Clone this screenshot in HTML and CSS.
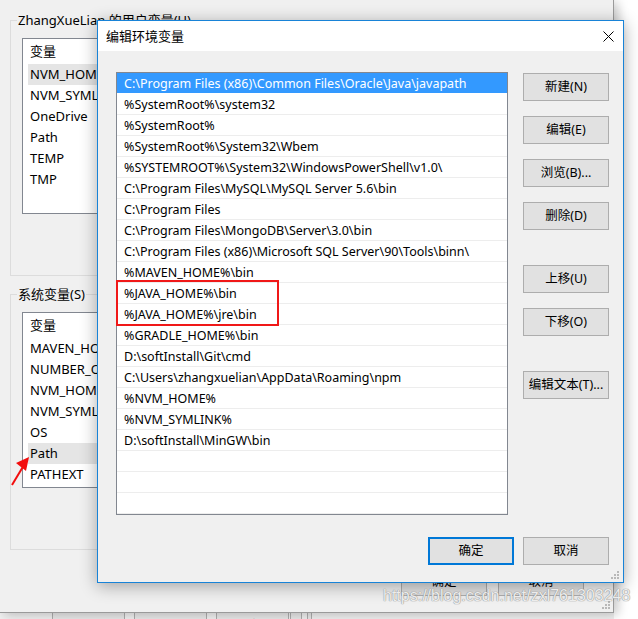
FILE: index.html
```html
<!DOCTYPE html>
<html lang="zh-CN">
<head>
<meta charset="utf-8">
<title>编辑环境变量</title>
<link rel="stylesheet" href="styles.css">
</head>
<body>
<div class="screen">
  <div class="bgwin">
    <fieldset class="group">
      <legend>ZhangXueLian 的用户变量(U)</legend>
      <div class="varlist">
        <div class="vhead">变量</div>
        <div class="vrow vsel">NVM_HOME</div>
        <div class="vrow">NVM_SYMLINK</div>
        <div class="vrow">OneDrive</div>
        <div class="vrow">Path</div>
        <div class="vrow">TEMP</div>
        <div class="vrow">TMP</div>
      </div>
    </fieldset>
    <fieldset class="group group-sys">
      <legend>系统变量(S)</legend>
      <div class="varlist">
        <div class="vhead">变量</div>
        <div class="vrow">MAVEN_HOME</div>
        <div class="vrow">NUMBER_OF_PROCESSORS</div>
        <div class="vrow">NVM_HOME</div>
        <div class="vrow">NVM_SYMLINK</div>
        <div class="vrow">OS</div>
        <div class="vrow vsel">Path</div>
        <div class="vrow">PATHEXT</div>
      </div>
    </fieldset>
    <div class="bgbtns">
      <div class="bbtn">确定</div>
      <div class="bbtn">取消</div>
    </div>
    <svg class="grip grip-bg" width="9" height="9" viewBox="0 0 9 9"><rect x="6" y="0" width="2" height="2"/><rect x="3" y="3" width="2" height="2"/><rect x="6" y="3" width="2" height="2"/><rect x="0" y="6" width="2" height="2"/><rect x="3" y="6" width="2" height="2"/><rect x="6" y="6" width="2" height="2"/></svg>
  </div>
  <div class="backstrip">
    <div class="sbtn">新建(W)...</div>
    <div class="sbtn">编辑(I)...</div>
    <div class="sbtn">删除(L)</div>
    <div class="sbtn sbtn-small"></div>
    <div class="sbtn sbtn-tiny"></div>
  </div>

  <svg class="arrow" width="40" height="40" viewBox="0 0 40 40">
    <line x1="12" y1="35" x2="24" y2="15" stroke="#f20d0d" stroke-width="2"/>
    <polygon points="29,7 16,13 26,21" fill="#f20d0d"/>
  </svg>

  <div class="dialog">
    <div class="titlebar">
      <span class="title">编辑环境变量</span>
      <svg class="close" width="11" height="11" viewBox="0 0 11 11"><path d="M0.5 0.5L10.5 10.5M10.5 0.5L0.5 10.5" stroke="#000" stroke-width="1"/></svg>
    </div>
    <div class="body">
      <div class="main">
        <div class="pathlist">
          <div class="prow psel">C:\Program Files (x86)\Common Files\Oracle\Java\javapath</div>
          <div class="prow">%SystemRoot%\system32</div>
          <div class="prow">%SystemRoot%</div>
          <div class="prow">%SystemRoot%\System32\Wbem</div>
          <div class="prow">%SYSTEMROOT%\System32\WindowsPowerShell\v1.0\</div>
          <div class="prow">C:\Program Files\MySQL\MySQL Server 5.6\bin</div>
          <div class="prow">C:\Program Files</div>
          <div class="prow">C:\Program Files\MongoDB\Server\3.0\bin</div>
          <div class="prow">C:\Program Files (x86)\Microsoft SQL Server\90\Tools\binn\</div>
          <div class="prow">%MAVEN_HOME%\bin</div>
          <div class="prow">%JAVA_HOME%\bin</div>
          <div class="prow">%JAVA_HOME%\jre\bin</div>
          <div class="prow">%GRADLE_HOME%\bin</div>
          <div class="prow">D:\softInstall\Git\cmd</div>
          <div class="prow">C:\Users\zhangxuelian\AppData\Roaming\npm</div>
          <div class="prow">%NVM_HOME%</div>
          <div class="prow">%NVM_SYMLINK%</div>
          <div class="prow">D:\softInstall\MinGW\bin</div>
          <div class="prow"></div>
          <div class="prow"></div>
          <div class="prow"></div>
        </div>
        <div class="sidebtns">
          <div class="btn">新建(N)</div>
          <div class="btn">编辑(E)</div>
          <div class="btn">浏览(B)...</div>
          <div class="btn">删除(D)</div>
          <div class="btn btn-gap">上移(U)</div>
          <div class="btn">下移(O)</div>
          <div class="btn btn-gap">编辑文本(T)...</div>
        </div>
      </div>
      <div class="footer">
        <div class="btn btn-default">确定</div>
        <div class="btn">取消</div>
      </div>
    </div>
    <svg class="grip grip-dlg" width="9" height="9" viewBox="0 0 9 9"><rect x="6" y="0" width="2" height="2"/><rect x="3" y="3" width="2" height="2"/><rect x="6" y="3" width="2" height="2"/><rect x="0" y="6" width="2" height="2"/><rect x="3" y="6" width="2" height="2"/><rect x="6" y="6" width="2" height="2"/></svg>
  </div>

  <div class="redbox"></div>
  <div class="watermark">https://blog.csdn.net/zxl761303248</div>
</div>
</body>
</html>
```

FILE: styles.css
```css
* {
  box-sizing: border-box;
}

html, body {
  margin: 0;
  padding: 0;
  background: #ffffff;
}

body {
  font-family: "Noto Sans", "Noto Sans CJK SC", sans-serif;
  font-size: 12.5px;
  color: #000;
}

.screen {
  position: relative;
  width: 638px;
  height: 619px;
  overflow: hidden;
  background: #ffffff;
}

/* background window */
.bgwin {
  position: relative;
  width: 614px;
  height: 613px;
  background: #f0f0f0;
  border-right: 1px solid #9a9a9a;
  border-bottom: 1px solid #9a9a9a;
  box-shadow: 4px 2px 10px rgba(0, 0, 0, 0.22);
  padding: 11px 0 0 10px;
  display: flex;
  flex-direction: column;
}

.group {
  width: 592px;
  height: 265px;
  margin: 0;
  padding: 9px 0 0 11px;
  border: 1px solid #dcdcdc;
  overflow: hidden;
}

.group legend {
  margin-left: -5px;
  padding: 0 1px;
  line-height: 18px;
  font-size: 13px;
}

.group-sys {
  margin-top: 9px;
}

.varlist {
  width: 300px;
  height: 176px;
  background: #ffffff;
  border: 1px solid #828790;
}

.vhead {
  height: 25px;
  line-height: 25px;
  margin-left: 5px;
  padding-left: 2px;
  font-size: 13px;
}

.vrow {
  height: 21px;
  line-height: 21px;
  margin-left: 5px;
  padding-left: 2px;
  white-space: nowrap;
  font-size: 13px;
}

.vsel {
  background: #e5e5e5;
}

.bgbtns {
  display: flex;
  justify-content: flex-end;
  gap: 11px;
  margin-top: 18px;
  padding-right: 29px;
}

.bbtn {
  width: 86px;
  height: 28px;
  line-height: 26px;
  text-align: center;
  background: #e1e1e1;
  border: 1px solid #adadad;
}

.grip {
  position: absolute;
  fill: #b8b8b8;
}

.grip-bg {
  right: 2px;
  bottom: 2px;
}

.backstrip {
  height: 6px;
  display: flex;
  gap: 9px;
  padding-left: 52px;
  background: #f0f0f0;
  width: 614px;
  overflow: hidden;
}

.sbtn {
  width: 73px;
  height: 24px;
  border: 1px solid #adadad;
  border-top: none;
  background: #e8e8e8;
  line-height: 22px;
  text-align: center;
  padding-top: 2px;
}

.sbtn-small {
  width: 12px;
  margin-left: -8px;
}

.sbtn-tiny {
  width: 5px;
  margin-left: -4px;
}

/* red annotations */
.arrow {
  position: absolute;
  left: 0;
  top: 450px;
}

.redbox {
  position: absolute;
  left: 116px;
  top: 280px;
  width: 163px;
  height: 46px;
  border: 2px solid #f01818;
}

/* dialog */
.dialog {
  position: absolute;
  left: 97px;
  top: 20px;
  width: 527px;
  height: 563px;
  background: #f0f0f0;
  border: 1px solid #1883d7;
  box-shadow: 0 3px 16px rgba(0, 0, 0, 0.33);
  display: flex;
  flex-direction: column;
}

.titlebar {
  height: 30px;
  background: #ffffff;
  display: flex;
  align-items: center;
  justify-content: space-between;
  padding: 0 9px 0 8px;
}

.title {
  font-size: 13px;
  line-height: 18px;
}

.close {
  display: block;
}

.body {
  flex: 1;
  display: flex;
  flex-direction: column;
  padding: 21px 14px 17px 18px;
}

.main {
  display: flex;
  gap: 15px;
  align-items: flex-start;
}

.pathlist {
  width: 392px;
  height: 443px;
  background: #ffffff;
  border: 1px solid #828790;
  overflow: hidden;
}

.prow {
  height: 21px;
  line-height: 22px;
  padding-left: 7px;
  border-bottom: 1px solid #ededed;
  white-space: nowrap;
}

.psel {
  background: #3399ff;
  color: #ffffff;
  border-bottom-color: #ffffff;
}

.sidebtns {
  display: flex;
  flex-direction: column;
  gap: 15px;
  padding-top: 1px;
}

.btn {
  width: 86px;
  height: 28px;
  line-height: 26px;
  text-align: center;
  background: #e1e1e1;
  border: 1px solid #adadad;
  white-space: nowrap;
}

.btn-gap {
  margin-top: 20px;
}

.footer {
  display: flex;
  justify-content: flex-end;
  gap: 9px;
  margin-top: 22px;
}

.btn-default {
  border: 2px solid #0078d7;
  line-height: 24px;
}

.grip-dlg {
  right: 3px;
  bottom: 2px;
}

.watermark {
  position: absolute;
  left: 383px;
  top: 586px;
  font-family: "Liberation Sans", Arial, sans-serif;
  font-size: 16px;
  line-height: 20px;
  color: rgba(255, 255, 255, 0.85);
  text-shadow: 0 0 1px #8a8a8a, 0 0 1px #8a8a8a;
  white-space: nowrap;
}
```
